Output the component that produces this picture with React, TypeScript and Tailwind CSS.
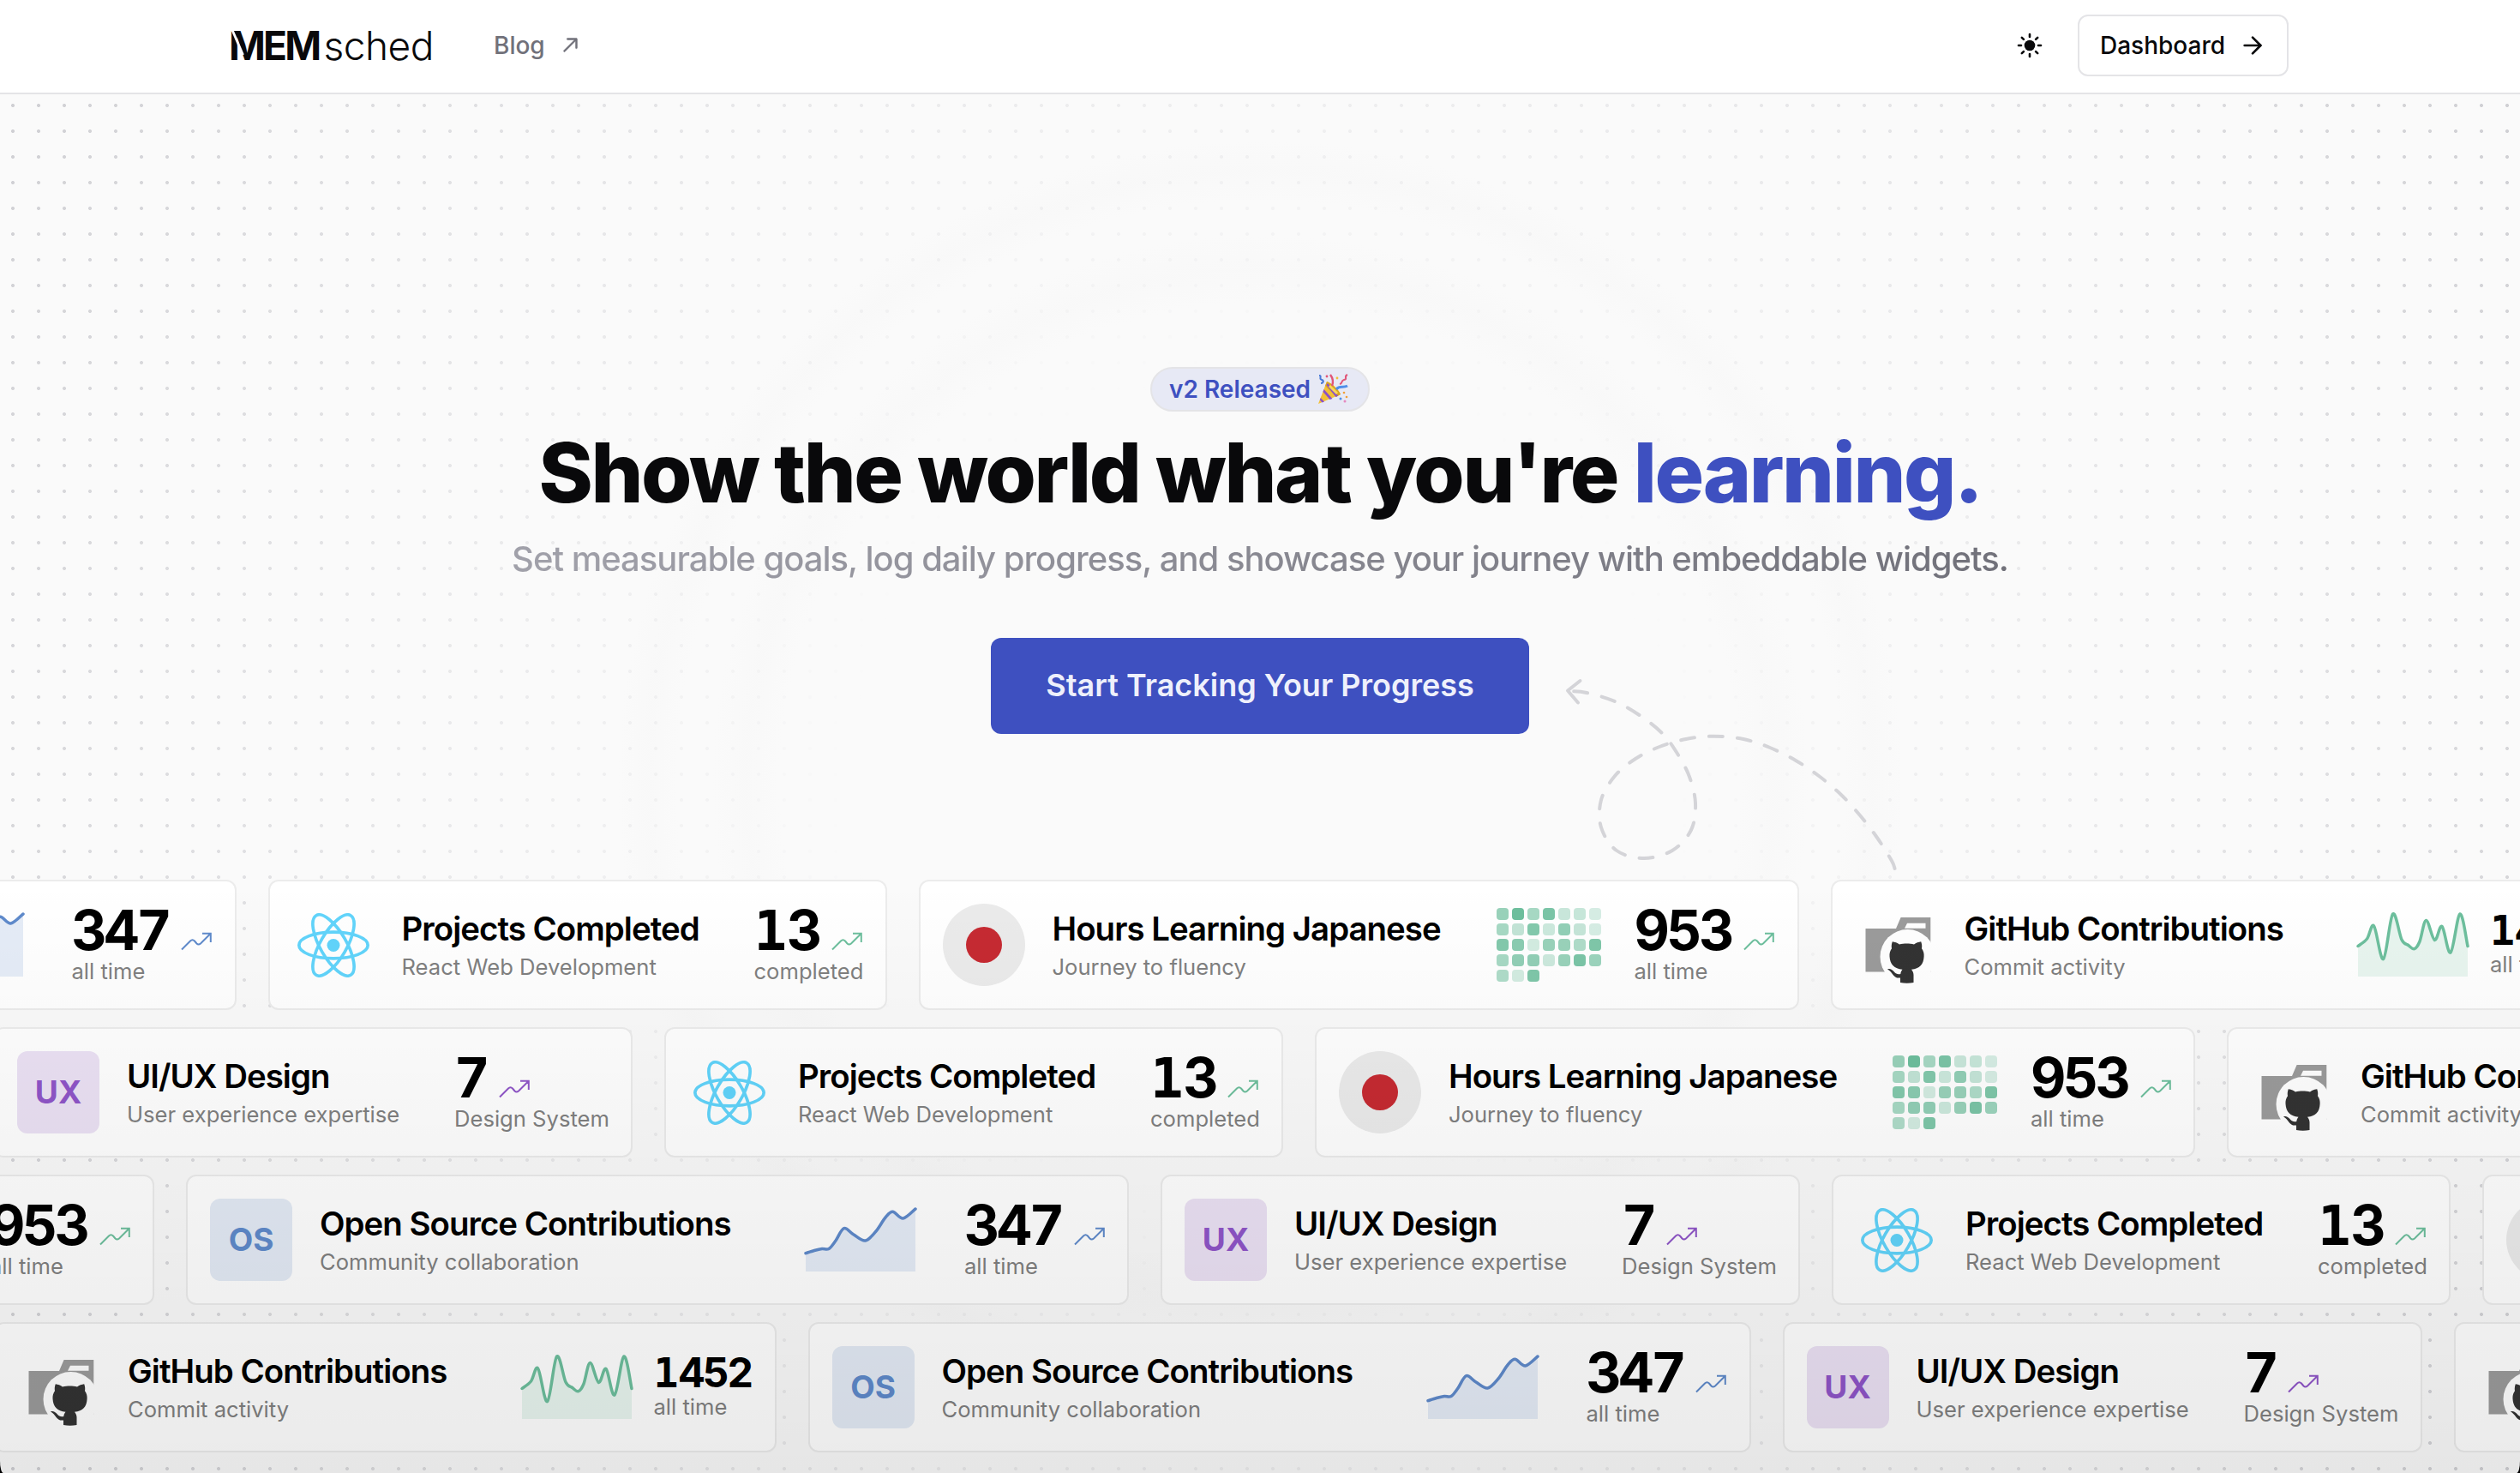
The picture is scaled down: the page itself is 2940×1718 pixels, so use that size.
import type { ReactNode } from 'react'
import { ArrowRight } from 'lucide-react'
import { RxArrowTopRight } from 'react-icons/rx'

type Point = [number, number]
type CardKind = 'os' | 'ux' | 'react' | 'japanese' | 'github'

// Catmull-Rom spline through the given points
function smoothPath(points: Point[]): string {
  let d = `M${points[0][0]} ${points[0][1]}`
  for (let i = 0; i < points.length - 1; i++) {
    const p0 = points[i - 1] ?? points[i]
    const p1 = points[i]
    const p2 = points[i + 1]
    const p3 = points[i + 2] ?? p2
    const c1 = [p1[0] + (p2[0] - p0[0]) / 6, p1[1] + (p2[1] - p0[1]) / 6]
    const c2 = [p2[0] - (p3[0] - p1[0]) / 6, p2[1] - (p3[1] - p1[1]) / 6]
    d += ` C${c1[0].toFixed(2)} ${c1[1].toFixed(2)} ${c2[0].toFixed(2)} ${c2[1].toFixed(2)} ${p2[0]} ${p2[1]}`
  }
  return d
}

const OS_POINTS: Point[] = [
  [0, 52.7], [10, 49.5], [19, 47.5], [27, 47.5], [35, 38], [44.6, 23.7], [56, 31], [69.5, 38],
  [82, 27], [93, 11], [101.5, 4.3], [113.6, 12], [128, 1],
]

const GITHUB_POINTS: Point[] = [
  [0, 38.5], [10.5, 30], [18.6, 15], [29.6, 53.5], [40.6, 1], [51, 31], [58.7, 37.5], [65.8, 41.7],
  [72, 33], [79.5, 8.5], [89.4, 31.5], [98, 15.5], [108, 46], [119, 1], [128, 38.5],
]

const LOOP_POINTS: Point[] = [
  [2210.5, 1013], [2207, 1004], [2190, 977], [2170, 951], [2148, 927], [2122, 905], [2095, 887], [2065, 872],
  [2034, 862], [2000, 858.7], [1967, 862], [1936, 871], [1908, 885], [1884, 905], [1868, 933], [1868, 965],
  [1886, 992], [1918, 1001], [1951, 992], [1973, 968], [1978, 937], [1971, 906], [1957, 879],
  [1940, 856], [1914, 835], [1884, 818], [1851, 808], [1831, 806],
]

const HEAT = [
  0.7, 1, 0.6, 0.9, 0.37, 0.38, 0.28,
  0.6, 0.42, 0.85, 0.35, 0.75, 0.4, 0.28,
  0.85, 0.8, 0.3, 0.7, 0.7, 0.55, 0.88,
  0.6, 0.75, 0.75, 0.35, 0.7, 0.9, 0.68,
  0.55, 0.3, 0.88,
]

function Sparkline({ points, color }: { points: Point[]; color: string }) {
  const line = smoothPath(points)
  return (
    <svg width="128" height="74" viewBox="0 0 128 74" className="shrink-0 overflow-visible">
      <path d={`${line} L128 74 L0 74 Z`} fill={color} fillOpacity="0.16" />
      <path d={line} fill="none" stroke={color} strokeWidth="3.5" strokeLinecap="round" />
    </svg>
  )
}

function HeatMap() {
  return (
    <div className="grid shrink-0 grid-cols-[repeat(7,14px)] gap-1">
      {HEAT.map((opacity, i) => (
        <div key={i} className="size-3.5 rounded-[4px] bg-[#6dbf9d]" style={{ opacity }} />
      ))}
    </div>
  )
}

function TrendIcon({ color }: { color: string }) {
  return (
    <svg width="36" height="22" viewBox="0 0 36 22" fill="none" stroke={color} strokeWidth="2" className="mb-1 shrink-0">
      <path d="M1 20.5L11 10.5Q13.5 8 16 10.5L18.5 13.5Q20.5 15.5 23 13.5L34.5 2M25 1.8H34.8V12" />
    </svg>
  )
}

function ReactLogo() {
  return (
    <svg width="84" height="75" viewBox="-11.5 -10.23 23 20.46" fill="none" stroke="#61d4fb">
      <circle r="2.05" fill="#61d4fb" stroke="none" />
      <ellipse rx="11" ry="4.2" />
      <ellipse rx="11" ry="4.2" transform="rotate(60)" />
      <ellipse rx="11" ry="4.2" transform="rotate(120)" />
    </svg>
  )
}

function GitHubFolder() {
  return (
    <svg width="96" height="96" viewBox="0 0 96 96">
      <path fill="#9b9b9b" fillRule="evenodd" d="M12.5 29H48L53.6 16H88.3V79.5H12.5ZM61 22.7L58 28.7H82.5V22.7Z" />
      <circle cx="61.5" cy="62" r="32" fill="#ffffff" />
      <path
        fill="#333333"
        d="M43.8 44.3C46.6 44.6 49.6 45.8 52 47.4C57 46.3 64 46.3 69 47.4C71.4 45.8 74.4 44.6 77.2 44.3C78.2 46.8 78.5 49.6 78 52.2C80.2 55 80.8 58 80.6 61.5C80.2 71 75.6 75.8 66 76.8C67.6 78.6 68.4 80.6 68.5 83V92C63.5 93 58 93 53 92V86.5C44.6 87.6 44.4 79.6 38 76.4C43 74.4 45.6 80 48.4 81.6C50 82.4 51.8 82.3 53.3 81.9C53.5 80 54.2 78.3 55.5 76.8C46 75.8 41 71 40.5 61.5C40.3 58 40.9 55 43 52.2C42.5 49.6 42.8 46.8 43.8 44.3Z"
      />
    </svg>
  )
}

function Monogram({ text, className }: { text: string; className: string }) {
  return (
    <div className={`flex size-24 items-center justify-center rounded-xl text-[37px] font-bold ${className}`}>{text}</div>
  )
}

const CARDS: Record<CardKind, {
  title: string
  subtitle: string
  value: string
  unit: string
  width: string
  valueWidth: string
  icon: ReactNode
  chart?: ReactNode
  trend?: string
}> = {
  os: {
    title: 'Open Source Contributions',
    subtitle: 'Community collaboration',
    value: '347',
    unit: 'all time',
    width: 'w-[1100px]',
    valueWidth: 'w-[164px] ml-[57px]',
    icon: <Monogram text="OS" className="bg-[#e3eaf5] text-[#5f8acb]" />,
    chart: <Sparkline points={OS_POINTS} color="#5f8acb" />,
    trend: '#5f8acb',
  },
  ux: {
    title: 'UI/UX Design',
    subtitle: 'User experience expertise',
    value: '7',
    unit: 'Design System',
    width: 'w-[746px]',
    valueWidth: 'w-[180px]',
    icon: <Monogram text="UX" className="bg-[#ebe1f4] text-[#8f55c8]" />,
    trend: '#8f55c8',
  },
  react: {
    title: 'Projects Completed',
    subtitle: 'React Web Development',
    value: '13',
    unit: 'completed',
    width: 'w-[722px]',
    valueWidth: 'w-[127px]',
    icon: <ReactLogo />,
    trend: '#6dbf9d',
  },
  japanese: {
    title: 'Hours Learning Japanese',
    subtitle: 'Journey to fluency',
    value: '953',
    unit: 'all time',
    width: 'w-[1027px]',
    valueWidth: 'w-[164px] ml-[39px]',
    icon: (
      <div className="flex size-24 items-center justify-center rounded-full bg-[#ebebeb]">
        <div className="size-[42px] rounded-full bg-[#c62a32]" />
      </div>
    ),
    chart: <HeatMap />,
    trend: '#6dbf9d',
  },
  github: {
    title: 'GitHub Contributions',
    subtitle: 'Commit activity',
    value: '1452',
    unit: 'all time',
    width: 'w-[912.5px]',
    valueWidth: 'w-[115px] ml-[26px]',
    icon: <GitHubFolder />,
    chart: <Sparkline points={GITHUB_POINTS} color="#6dbf9d" />,
  },
}

// Inter's "1" has no foot, so that digit comes from a monospaced face
function Digits({ value }: { value: string }) {
  if (!value.startsWith('1')) return value
  return (
    <>
      <span className="font-['DejaVu_Sans_Mono',monospace] tracking-normal">1</span>
      {value.slice(1)}
    </>
  )
}

function Card({ kind }: { kind: CardKind }) {
  const c = CARDS[kind]
  return (
    <div className={`flex h-[152px] shrink-0 items-center rounded-xl border-2 border-[#ececec] bg-white px-[26px] ${c.width}`}>
      <div className="mr-8 flex size-24 shrink-0 items-center justify-center">{c.icon}</div>
      <div className="min-w-0 flex-1 pt-0.5 whitespace-nowrap">
        <div className="text-[38.4px] leading-[46px] font-semibold tracking-[-0.025em] text-black">{c.title}</div>
        <div className="mt-1 text-[25.6px] leading-9 text-[#808080]">{c.subtitle}</div>
      </div>
      {c.chart}
      <div className={`shrink-0 whitespace-nowrap ${c.valueWidth}`}>
        <div className="flex items-end gap-3.5">
          <span className={`font-bold tracking-[-0.055em] text-black tabular-nums ${c.trend ? 'h-[57px] text-[64px] leading-[57px]' : 'h-11 text-[48px] leading-[44px]'}`}>
            <Digits value={c.value} />
          </span>
          {c.trend && <TrendIcon color={c.trend} />}
        </div>
        <div className={`text-[25.6px] leading-8 text-[#808080] ${c.trend ? 'mt-1' : 'mt-0.5'}`}>{c.unit}</div>
      </div>
    </div>
  )
}

const ROWS: Array<{ offset: string; cards: CardKind[] }> = [
  { offset: 'ml-[-824.5px]', cards: ['os', 'react', 'japanese', 'github'] },
  { offset: 'ml-[-8px]', cards: ['ux', 'react', 'japanese', 'github'] },
  { offset: 'ml-[-847px]', cards: ['japanese', 'os', 'ux', 'react', 'japanese'] },
  { offset: 'ml-[-7px]', cards: ['github', 'os', 'ux', 'github'] },
]

function SunIcon() {
  return (
    <svg width="30" height="30" viewBox="-15 -15 30 30" stroke="#09090b" strokeWidth="2.6" strokeLinecap="round">
      <circle r="6.3" fill="#09090b" stroke="none" />
      {[0, 45, 90, 135, 180, 225, 270, 315].map((a) => (
        <path key={a} d="M0 -10V-13" transform={`rotate(${a})`} />
      ))}
    </svg>
  )
}

function PartyPopper() {
  return (
    <svg width="36" height="36" viewBox="0 0 36 36" fill="none" className="ml-2">
      <path d="M1 35L11 9C17 11 25 19 27 24Z" fill="#f2c037" />
      <path d="M11 9L9 14L22 27L27 24C25 19 17 11 11 9Z" fill="#dba520" />
      <path d="M7.5 18L17.5 29L14.5 30L6.5 21ZM3.8 28L8 32.5L5.5 33.5L2.8 30.5ZM12 11L24 25.5L21.5 27L10.5 13Z" fill="#8b50c8" />
      <path d="M14 14L23 23" stroke="#f7d65c" strokeWidth="3" />
      <path d="M17 14C19 9 18 5 15 1" stroke="#e05578" strokeWidth="2.4" />
      <path d="M22 18C26 13 30 17 35 14" stroke="#4f8ee8" strokeWidth="3" />
      <path d="M2 2C6 2 1 6 5 7C8 8 7 11 4 11" stroke="#4778d8" strokeWidth="2" />
      <path d="M35 1C30 3 36 6 31 7C27 8 30 11 26 12" stroke="#e05578" strokeWidth="2" />
      <circle cx="11" cy="3" r="1.4" fill="#e05578" />
      <circle cx="23" cy="5" r="1.4" fill="#f2c037" />
      <circle cx="31" cy="22" r="1.3" fill="#f2a037" />
      <circle cx="27" cy="29" r="1.5" fill="#4f8ee8" />
      <circle cx="34" cy="27" r="1.3" fill="#f2a037" />
      <circle cx="32" cy="32" r="1.5" fill="#e58ac0" />
    </svg>
  )
}

function Header() {
  return (
    <header className="relative flex h-[110px] items-center justify-between border-b-2 border-[#e4e4e7] bg-white px-[270px] pb-0.5">
      <div className="flex items-center">
        <div className="relative flex w-[234px] items-baseline text-[46px] leading-none whitespace-nowrap text-[#09090b]">
          <span className="ml-[-3px] font-bold tracking-[-0.06em]">MEM</span>
          <span className="ml-[5px] font-light tracking-[-0.01em]">sched</span>
          <svg width="20" height="36" viewBox="0 0 20 36" className="absolute top-[5px] left-0">
            <path d="M1 0L13.5 29" stroke="#ffffff" strokeWidth="2.8" />
          </svg>
        </div>
        <a className="ml-[72px] flex items-center text-[28px] font-medium text-[#71717a]">
          Blog
          <RxArrowTopRight className="ml-[15px] size-7" stroke="currentColor" strokeWidth={0.3} />
        </a>
      </div>
      <div className="flex items-center gap-[41px]">
        <SunIcon />
        <button className="flex h-[72px] w-[246px] items-center justify-between rounded-xl border-2 border-[#e4e4e7] bg-white pr-6 pl-6 text-[28px] font-medium text-[#09090b]">
          Dashboard
          <ArrowRight size={32} strokeWidth={2} />
        </button>
      </div>
    </header>
  )
}

export default function App() {
  return (
    <div className="bg-black font-['Inter',sans-serif]">
      <div className="relative flex h-[1718px] w-[2940px] flex-col overflow-hidden bg-[#fafafa] [border-bottom-left-radius:4px_14px] [border-bottom-right-radius:4px_14px]">
        <Header />
        <main className="relative isolate flex flex-1 flex-col">
          <div className="absolute inset-0 -z-10 bg-[radial-gradient(circle_at_1470px_804px,transparent_560px,#f8f8f8_600px,transparent_640px,transparent_680px,#f8f8f8_715px,transparent_750px)] opacity-80" />
          <div className="absolute inset-0 -z-10 bg-[radial-gradient(circle,#cfcfd3_1.7px,transparent_2.3px)] bg-[length:30px_30px] bg-[position:0_-2px] [mask-image:radial-gradient(circle_at_center,transparent_28%,black)]" />

          <section className="flex h-[916px] flex-col items-center pt-[318px]">
            <div className="flex h-[52px] w-64 items-center rounded-full border-2 border-[#e4e4e7] bg-[#e7e9f5] pl-5 text-[28px] font-semibold whitespace-nowrap text-[#3e50c0]">
              v2 Released
              <PartyPopper />
            </div>
            <h1 className="mt-[23px] text-[96px] leading-[96px] font-extrabold tracking-[-0.025em] whitespace-nowrap text-[#09090b]">
              Show the world what you&apos;re <span className="text-[#3e50c0]">learning.</span>
            </h1>
            <p className="mt-[25px] bg-linear-to-r from-[#a1a1aa] to-[#71717a] bg-clip-text text-[40px] leading-[56px] font-medium tracking-[-0.025em] whitespace-nowrap text-transparent">
              Set measurable goals, log daily progress, and showcase your journey with embeddable widgets.
            </p>
            <button className="mt-16 h-28 w-[628px] rounded-xl bg-[#3e50c0] pb-0.5 text-[36px] font-semibold text-[#eef0fb]">
              Start Tracking Your Progress
            </button>
          </section>

          <svg width="420" height="250" viewBox="1810 780 420 250" fill="none" stroke="#d4d4d8" strokeWidth="4" strokeLinecap="round" className="absolute top-[670px] left-[1810px]">
            <path d={smoothPath(LOOP_POINTS)} strokeDasharray="16 17" />
            <path d="M1843.5 794L1829 805.5L1841 819.5" strokeLinejoin="round" />
          </svg>

          <section className="relative flex flex-col gap-5">
            {ROWS.map((row, i) => (
              <div key={i} className={`flex gap-[37px] ${row.offset}`}>
                {row.cards.map((kind, j) => (
                  <Card key={j} kind={kind} />
                ))}
              </div>
            ))}
          </section>

          <div className="absolute inset-x-0 top-[916px] bottom-0 bg-linear-to-b from-transparent via-black/[0.045] to-black/8" />
        </main>
      </div>
    </div>
  )
}
